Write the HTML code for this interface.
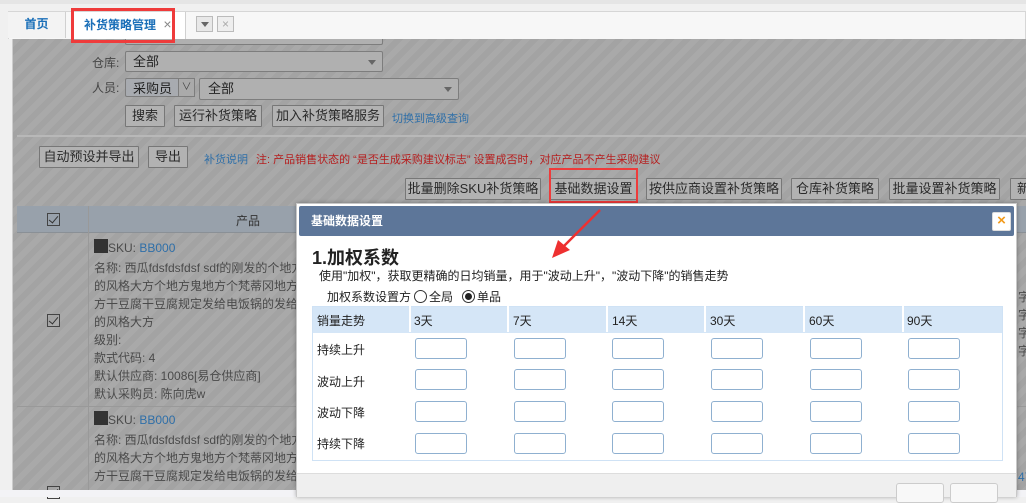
<!DOCTYPE html>
<html><head><meta charset="utf-8"><style>
*{box-sizing:border-box;margin:0;padding:0}
body{width:1026px;height:497px;overflow:hidden;position:relative;background:#f0f0f0;font-family:"Liberation Sans","Noto Sans CJK SC",sans-serif;font-size:12px;color:#333}
.a{position:absolute}
.content{left:12px;top:39px;width:1014px;height:451px;background-color:#a3a3a3;background-image:repeating-linear-gradient(135deg,rgba(255,255,255,.07) 0 6px,rgba(0,0,0,0) 6px 12px);border-left:1px solid #ccc}
.btn{position:absolute;height:22px;border:1px solid #777;background:#b2b2b2;color:#2a2a2a;font-size:13px;line-height:20px;text-align:center;border-radius:1px}
.sel{position:absolute;border:1px solid #7d7d7d;background:#b0b0b0;color:#222;font-size:13px;padding-left:7px;line-height:19px;border-radius:2px}
.sel:after{content:"";position:absolute;right:6px;top:8px;border:4px solid transparent;border-top:5px solid #666}
.t{position:absolute;color:#4a4a4a;font-size:12px;white-space:nowrap}
.cb{position:absolute;width:13px;height:13px;border:1px solid #444}
.cb:after{content:"";position:absolute;left:3px;top:0px;width:4px;height:8px;border-right:1.5px solid #333;border-bottom:1.5px solid #333;transform:rotate(40deg)}
.inp{position:absolute;width:52px;height:21px;border:1px solid #8fb0d0;border-radius:3px;background:#fff}
</style></head><body>
<div class="a" style="left:0;top:0;width:1026px;height:4px;background:#e5e5e5"></div>
<div class="a" style="left:8px;top:11px;width:1018px;height:28px;background:#f7f7f7;border:1px solid #d6d6d6;border-bottom:none"></div>
<div class="a" style="left:8px;top:12px;width:58px;height:26px;background:#f3f3f3;border-right:1px solid #d0d0d0;color:#1a6fb8;font-weight:bold;font-size:12px;line-height:24px;text-align:center">首页</div>
<div class="a" style="left:72px;top:12px;width:114px;height:27px;background:#fff;border-right:1px solid #d0d0d0;color:#1a6fb8;font-weight:bold;font-size:12px;line-height:24px;padding-left:12px">补货策略管理 <span style="color:#888;font-weight:normal;font-size:14px;margin-left:4px">×</span></div>
<div class="a" style="left:71px;top:8px;width:104px;height:35px;border:3px solid #ef3b3b;z-index:5"></div>
<div class="a" style="left:196px;top:16px;width:17px;height:16px;border:1px solid #bbb;background:#e8e8e8"><div class="a" style="left:4px;top:5px;border:4px solid transparent;border-top:5px solid #666"></div></div>
<div class="a" style="left:217px;top:16px;width:17px;height:16px;border:1px solid #bbb;background:#eee;color:#aaa;font-size:12px;line-height:14px;text-align:center">×</div>

<div class="a content"></div>
<div class="a" style="left:125px;top:39px;width:258px;height:6px;border:1px solid #7d7d7d;border-top:none;background:#b0b0b0;border-radius:0 0 2px 2px"></div>
<div class="t" style="left:92px;top:54px;color:#444;font-size:12px">仓库:</div>
<div class="sel" style="left:125px;top:51px;width:258px;height:21px">全部</div>
<div class="t" style="left:92px;top:79px;color:#444">人员:</div>
<div class="sel" style="left:125px;top:78px;width:70px;height:19px;background:#a8abb0">采购员</div>
<div class="a" style="left:178px;top:78px;width:17px;height:19px;border:1px solid #7d7d7d;background:#aaa;color:#444;font-size:10px;text-align:center;line-height:17px">∨</div>
<div class="sel" style="left:199px;top:78px;width:260px;height:22px;padding-left:8px;line-height:20px">全部</div>
<div class="btn" style="left:125px;top:105px;width:40px">搜索</div>
<div class="btn" style="left:174px;top:105px;width:88px">运行补货策略</div>
<div class="btn" style="left:272px;top:105px;width:112px">加入补货策略服务</div>
<div class="t" style="left:392px;top:110px;color:#2f6fa8;font-size:11px">切换到高级查询</div>
<div class="a" style="left:17px;top:135px;width:1009px;height:2px;background:#b8b8b8"></div>
<div class="btn" style="left:39px;top:146px;width:100px">自动预设并导出</div>
<div class="btn" style="left:148px;top:146px;width:40px">导出</div>
<div class="t" style="left:204px;top:151px;color:#2f6fa8;font-size:11px">补货说明</div>
<div class="t" style="left:256px;top:151px;color:#b52020;font-size:11px">注: 产品销售状态的 “是否生成采购建议标志” 设置成否时，对应产品不产生采购建议</div>
<div class="btn" style="left:405px;top:178px;width:136px">批量删除SKU补货策略</div>
<div class="btn" style="left:550px;top:178px;width:87px">基础数据设置</div>
<div class="a" style="left:549px;top:168px;width:89px;height:35px;border:2px solid #ef3b3b"></div>
<div class="btn" style="left:646px;top:178px;width:136px">按供应商设置补货策略</div>
<div class="btn" style="left:791px;top:178px;width:88px">仓库补货策略</div>
<div class="btn" style="left:889px;top:178px;width:111px">批量设置补货策略</div>
<div class="btn" style="left:1010px;top:178px;width:30px;text-align:left;padding-left:6px">新</div>
<div class="a" style="left:17px;top:206px;width:1009px;height:27px;background:#98a1ab;border-bottom:1px solid #8a9096"></div>
<div class="a" style="left:88px;top:206px;width:1px;height:284px;background:#999"></div>
<div class="cb" style="left:47px;top:213px"></div>
<div class="t" style="left:236px;top:212px;color:#333">产品</div>
<div class="a" style="left:17px;top:406px;width:1009px;height:1px;background:#999"></div>
<div class="cb" style="left:47px;top:314px"></div>
<div class="cb" style="left:47px;top:486px"></div>
<div class="a" style="left:94px;top:239px;width:14px;height:14px;background:#333"></div>
<div class="t" style="left:108px;top:241px;color:#4a4a4a">SKU: <span style="color:#2f6fa8">BB000</span></div>
<div class="t" style="left:94px;top:259px">名称: 西瓜fdsfdsfdsf sdf的刚发的个地方个</div>
<div class="t" style="left:94px;top:277px">的风格大方个地方鬼地方个梵蒂冈地方干豆</div>
<div class="t" style="left:94px;top:295px">方干豆腐干豆腐规定发给电饭锅的发给对方</div>
<div class="t" style="left:94px;top:313px">的风格大方</div>
<div class="t" style="left:94px;top:331px">级别:</div>
<div class="t" style="left:94px;top:349px">款式代码: 4</div>
<div class="t" style="left:94px;top:367px">默认供应商: 10086[易仓供应商]</div>
<div class="t" style="left:94px;top:385px">默认采购员: 陈向虎w</div>
<div class="a" style="left:94px;top:411px;width:14px;height:14px;background:#333"></div>
<div class="t" style="left:108px;top:413px">SKU: <span style="color:#2f6fa8">BB000</span></div>
<div class="t" style="left:94px;top:431px">名称: 西瓜fdsfdsfdsf sdf的刚发的个地方个</div>
<div class="t" style="left:94px;top:449px">的风格大方个地方鬼地方个梵蒂冈地方干豆</div>
<div class="t" style="left:94px;top:467px">方干豆腐干豆腐规定发给电饭锅的发给对方</div>
<div class="t" style="left:1018px;top:288px;line-height:18px">字<br>字<br>字<br>字</div>
<div class="t" style="left:1018px;top:470px;color:#2f6fa8">47</div>
<div class="a" style="left:0;top:490px;width:1026px;height:7px;background:#f3f3f6"></div>

<!-- dialog -->
<div class="a" style="left:296px;top:203px;width:721px;height:294px;background:#fff;border:1px solid #c8c8c8;box-shadow:0 0 4px rgba(0,0,0,.3)">
 <div class="a" style="left:2px;top:2px;width:715px;height:30px;background:#5d7699;border-radius:2px;color:#fff;font-weight:bold;font-size:12px;line-height:30px;padding-left:12px">基础数据设置</div>
 <div class="a" style="left:695px;top:8px;width:19px;height:19px;background:#fff;border:1px solid #ddd;border-radius:2px;color:#f29a1a;font-weight:bold;font-size:15px;line-height:16px;text-align:center">×</div>
 <div class="a" style="left:15px;top:40px;font-size:18px;font-weight:bold;color:#222">1.加权系数</div>
 <div class="a" style="left:22px;top:63px;font-size:12px;color:#222;white-space:nowrap">使用"加权"，获取更精确的日均销量，用于"波动上升"，"波动下降"的销售走势</div>
 <div class="a" style="left:30px;top:84px;font-size:12px;color:#222;white-space:nowrap">加权系数设置方</div>
 <div class="a" style="left:96px;top:100px;font-size:12px;color:#222">式:</div>
 <div class="a" style="left:117px;top:86px;width:13px;height:13px;border:1px solid #333;border-radius:50%"></div>
 <div class="a" style="left:132px;top:84px;font-size:12px;color:#222">全局</div>
 <div class="a" style="left:165px;top:86px;width:13px;height:13px;border:1px solid #333;border-radius:50%"><div class="a" style="left:2px;top:2px;width:7px;height:7px;background:#222;border-radius:50%"></div></div>
 <div class="a" style="left:180px;top:84px;font-size:12px;color:#222">单品</div>
 <div class="a" style="left:15px;top:102px;width:691px;height:155px;border:1px solid #cfe2f5">
  <div class="a" style="left:0;top:0;width:689px;height:26px;background:#d5e6f7"></div>
 </div>
</div>
<div class="a" style="left:297px;top:473px;width:719px;height:24px;background:#efefef;border-top:1px solid #ddd"></div>
<div class="a" style="left:896px;top:483px;width:48px;height:20px;border:1px solid #ccc;border-radius:3px;background:#f8f8f8"></div>
<div class="a" style="left:950px;top:483px;width:48px;height:20px;border:1px solid #ccc;border-radius:3px;background:#f8f8f8"></div>
<div class="a" style="left:409px;top:306px;width:2px;height:26px;background:#fff"></div>
<div class="a" style="left:507px;top:306px;width:2px;height:26px;background:#fff"></div>
<div class="a" style="left:606px;top:306px;width:2px;height:26px;background:#fff"></div>
<div class="a" style="left:704px;top:306px;width:2px;height:26px;background:#fff"></div>
<div class="a" style="left:803px;top:306px;width:2px;height:26px;background:#fff"></div>
<div class="a" style="left:902px;top:306px;width:2px;height:26px;background:#fff"></div>
<div class="a" style="left:317px;top:312px;color:#222;font-size:12px">销量走势</div>
<div class="a" style="left:414px;top:312px;color:#222">3天</div>
<div class="a" style="left:513px;top:312px;color:#222">7天</div>
<div class="a" style="left:612px;top:312px;color:#222">14天</div>
<div class="a" style="left:710px;top:312px;color:#222">30天</div>
<div class="a" style="left:809px;top:312px;color:#222">60天</div>
<div class="a" style="left:907px;top:312px;color:#222">90天</div>
<div class="a" style="left:317px;top:341px;color:#222">持续上升</div>
<div class="a" style="left:317px;top:373px;color:#222">波动上升</div>
<div class="a" style="left:317px;top:404px;color:#222">波动下降</div>
<div class="a" style="left:317px;top:435px;color:#222">持续下降</div>

<div class="inp" style="left:415px;top:338px"></div><div class="inp" style="left:514px;top:338px"></div><div class="inp" style="left:612px;top:338px"></div><div class="inp" style="left:711px;top:338px"></div><div class="inp" style="left:810px;top:338px"></div><div class="inp" style="left:908px;top:338px"></div>
<div class="inp" style="left:415px;top:369px"></div><div class="inp" style="left:514px;top:369px"></div><div class="inp" style="left:612px;top:369px"></div><div class="inp" style="left:711px;top:369px"></div><div class="inp" style="left:810px;top:369px"></div><div class="inp" style="left:908px;top:369px"></div>
<div class="inp" style="left:415px;top:401px"></div><div class="inp" style="left:514px;top:401px"></div><div class="inp" style="left:612px;top:401px"></div><div class="inp" style="left:711px;top:401px"></div><div class="inp" style="left:810px;top:401px"></div><div class="inp" style="left:908px;top:401px"></div>
<div class="inp" style="left:415px;top:433px"></div><div class="inp" style="left:514px;top:433px"></div><div class="inp" style="left:612px;top:433px"></div><div class="inp" style="left:711px;top:433px"></div><div class="inp" style="left:810px;top:433px"></div><div class="inp" style="left:908px;top:433px"></div>

<svg class="a" style="left:540px;top:200px" width="70" height="70"><line x1="60" y1="10" x2="22" y2="48" stroke="#ee3030" stroke-width="2.5"/><polygon points="12,58 18,40 30,50" fill="#ee3030"/></svg>
</body></html>
